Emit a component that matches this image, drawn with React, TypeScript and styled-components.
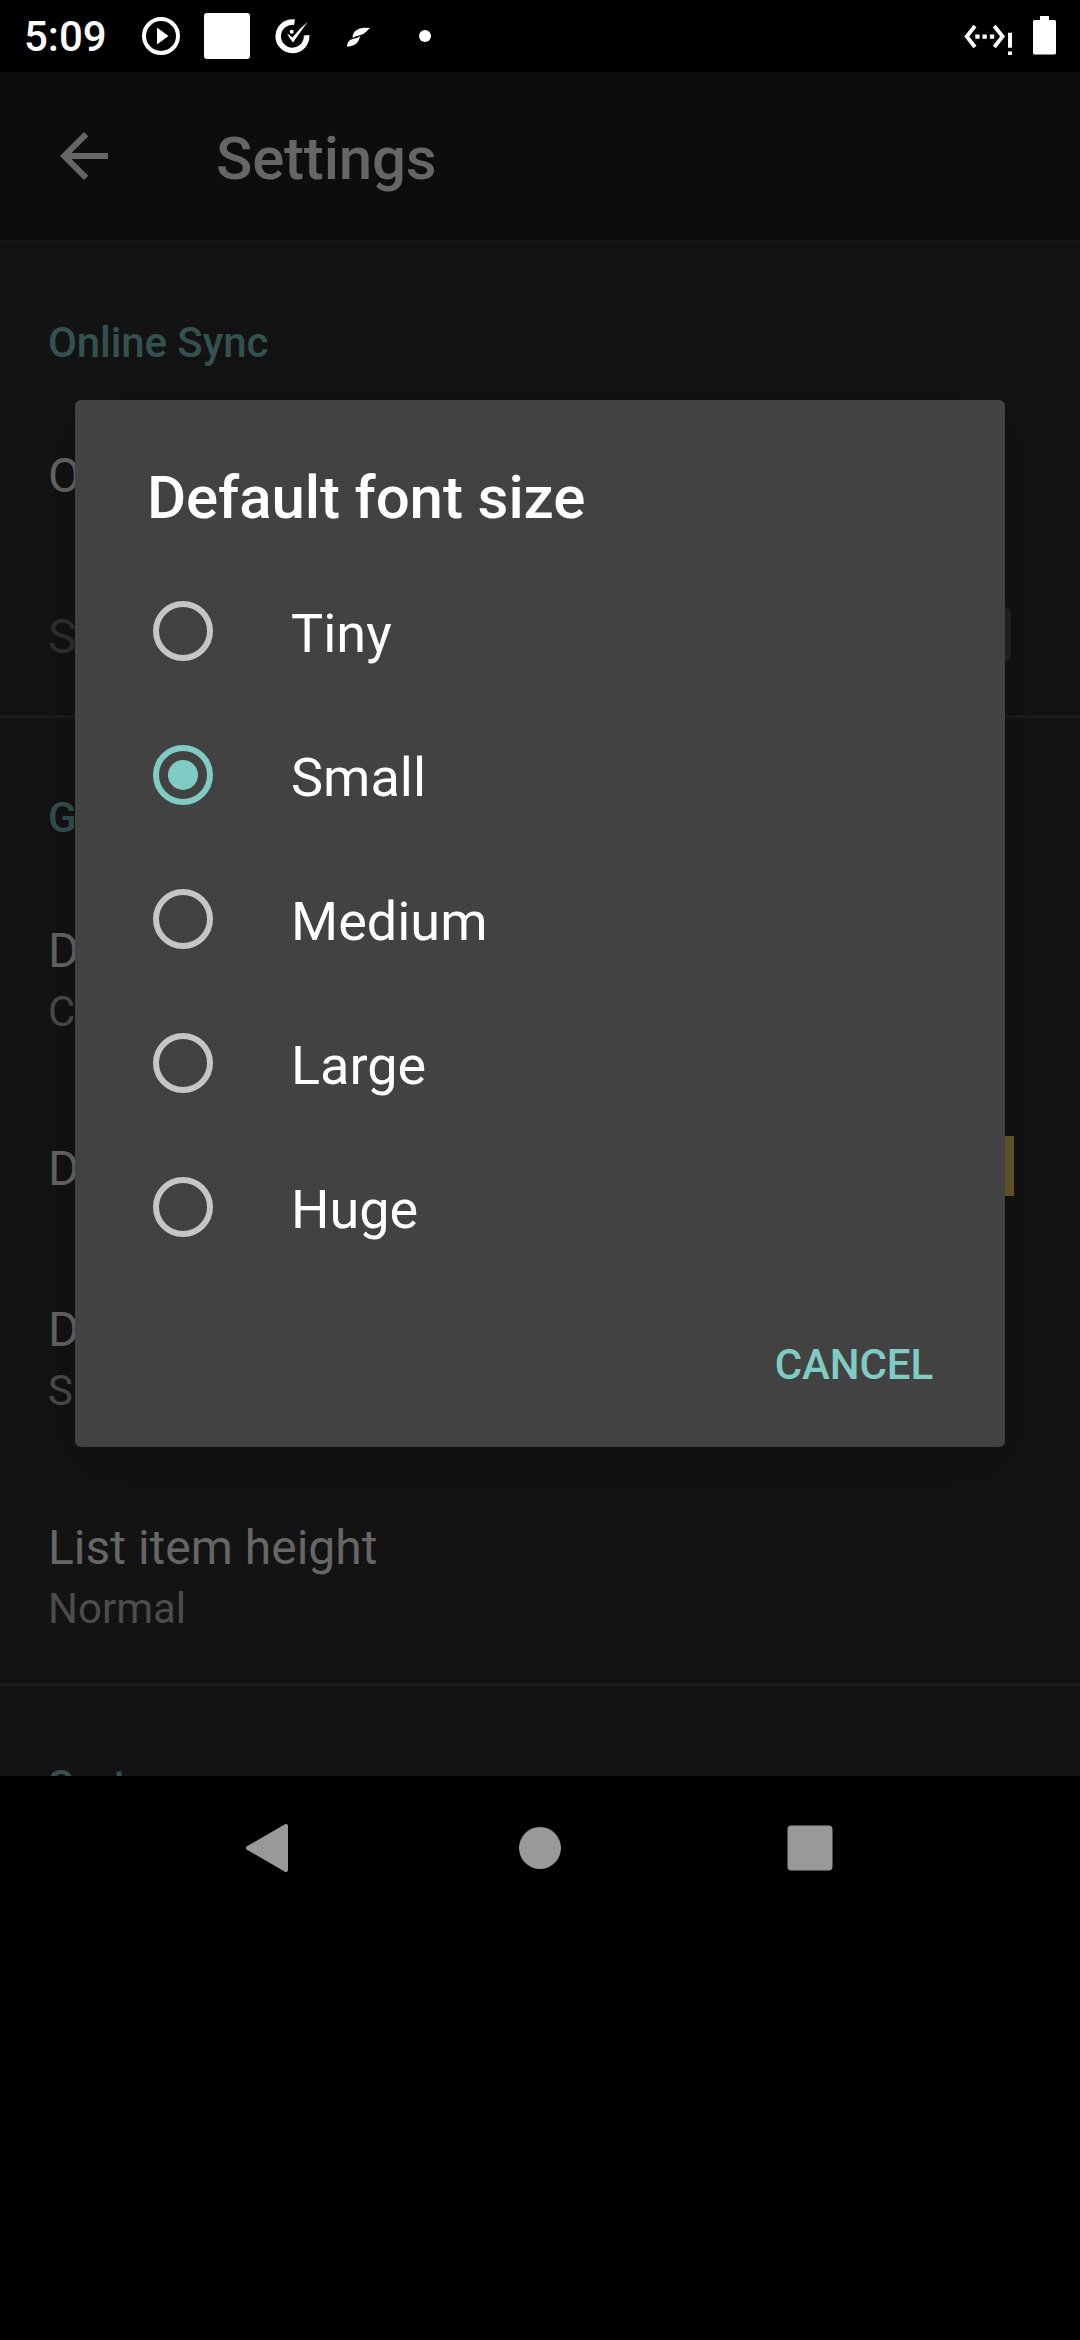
import React from 'react';
import styled, { createGlobalStyle } from 'styled-components';

const Global = createGlobalStyle`
  * { box-sizing: border-box; }
  html, body { margin: 0; background: #000; }
  body { font-family: Roboto, "Liberation Sans", sans-serif; overflow: hidden; }
`;

const Screen = styled.div`
  position: relative;
  width: 1080px;
  height: 2340px;
  background: #000;
  display: flex;
  flex-direction: column;
  overflow: hidden;
`;

const StatusBar = styled.header`
  height: 72px;
  flex: none;
  display: flex;
  align-items: center;
  padding: 0 24px;
  color: #fff;
`;

const Clock = styled.span`
  width: 111px;
  padding-top: 2px;
  font-size: 42px;
  font-weight: 500;
  line-height: 50px;
`;

const StatusIcons = styled.div`
  display: flex;
  flex: 1;
`;

const Connectivity = styled.div`
  display: flex;
  gap: 13px;
`;

const Page = styled.div`
  height: 1704px;
  flex: none;
  display: flex;
  flex-direction: column;
  overflow: hidden;
  background: #131313;
`;

const Toolbar = styled.div`
  height: 168px;
  flex: none;
  display: flex;
  align-items: center;
  padding: 0 48px;
  gap: 96px;
  background: #0d0d0d;
  color: #666;
`;

const ToolbarTitle = styled.h1`
  margin: 0;
  padding-top: 6px;
  font-size: 60px;
  font-weight: 500;
  line-height: 70px;
  letter-spacing: -0.2px;
`;

const Section = styled.section`
  flex: none;
  border-top: 3px solid #1c1c1c;
  &:first-child { border-top-color: #151515; }
`;

const Category = styled.h2`
  margin: 0;
  height: 150px;
  padding: 75px 48px 0;
  font-size: 42px;
  font-weight: 500;
  line-height: 49px;
  letter-spacing: -0.1px;
  color: #33514e;
`;

const Preference = styled.div<{ $disabled?: boolean }>`
  display: flex;
  justify-content: space-between;
  padding: 50px 66px 46px 48px;
  color: ${(p) => (p.$disabled ? '#2f2f2f' : '#666')};
`;

const PrefTitle = styled.div`
  font-size: 48px;
  line-height: 65px;
`;

const Summary = styled.div`
  font-size: 42px;
  line-height: 57px;
  color: #4c4c4c;
`;

const SwitchThumb = styled.span`
  width: 81px;
  height: 54px;
  margin: 3px 3px 0 0;
  border-radius: 6px;
  background: #242424;
`;

const Swatch = styled.span`
  width: 60px;
  height: 60px;
  background: #65582d;
`;

const Dialog = styled.div`
  position: absolute;
  left: 75px;
  top: 400px;
  width: 930px;
  height: 1047px;
  border-radius: 6px;
  background: #424242;
  box-shadow: 0 16px 60px rgba(0, 0, 0, 0.22);
  display: flex;
  flex-direction: column;
`;

const DialogTitle = styled.h2`
  margin: 0;
  height: 159px;
  padding: 63px 72px 0;
  font-size: 60px;
  font-weight: 500;
  line-height: 70px;
  letter-spacing: -0.1px;
  color: #fff;
`;

const Option = styled.label`
  height: 144px;
  display: flex;
  align-items: center;
  padding-left: 78px;
  gap: 78px;
  color: #fff;
  font-size: 54px;
`;

const Radio = styled.span<{ $on: boolean }>`
  width: 60px;
  height: 60px;
  border: 6px solid ${(p) => (p.$on ? '#80cbc4' : '#c6c6c6')};
  border-radius: 50%;
  display: grid;
  place-items: center;
  &::after {
    content: '';
    width: 30px;
    height: 30px;
    border-radius: 50%;
    background: ${(p) => (p.$on ? '#80cbc4' : 'transparent')};
  }
`;

const OptionLabel = styled.span`
  padding-top: 5px;
  line-height: 64px;
`;

const Actions = styled.div`
  display: flex;
  justify-content: flex-end;
  padding: 61px 72px 0 0;
`;

const CancelButton = styled.button`
  border: 0;
  padding: 0;
  background: none;
  color: #80cbc4;
  font: 500 42px/49px Roboto, sans-serif;
  letter-spacing: -0.1px;
`;

const NavBar = styled.nav`
  height: 144px;
  flex: none;
  display: flex;
  justify-content: center;
  align-items: center;
  gap: 198px;
`;

const options = ['Tiny', 'Small', 'Medium', 'Large', 'Huge'];

const Item = ({ title, summary, disabled, extra }: {
  title: string; summary?: string; disabled?: boolean; extra?: React.ReactNode;
}) => (
  <Preference $disabled={disabled}>
    <div>
      <PrefTitle>{title}</PrefTitle>
      {summary && <Summary>{summary}</Summary>}
    </div>
    {extra}
  </Preference>
);

export default function App() {
  return (
    <Screen>
      <Global />
      <StatusBar>
        <Clock>5:09</Clock>
        <StatusIcons>
          <svg width="52" height="56" viewBox="135 8 52 56" fill="#fff">
            <circle cx="161" cy="36" r="17" fill="none" stroke="#fff" strokeWidth="4" />
            <path d="M157 27.5v17l11.5-8.5z" />
          </svg>
          <svg width="80" height="56" viewBox="187 8 80 56" fill="#fff">
            <rect x="204" y="13" width="46" height="46" rx="3" />
          </svg>
          <svg width="60" height="56" viewBox="267 8 60 56" fill="#fff">
            <path d="M294.500 22.200A14.200 14.200 0 1 0 306.600 35.300" fill="none" stroke="#fff" strokeWidth="5.600" />
            <path d="M287 33.200q2 1.200 5.400 4.300Q299 29 307.700 21.700 301 31 293 42.600 289.500 38.500 287 33.200z" />
            <circle cx="291.700" cy="31.700" r="2" />
          </svg>
          <svg width="60" height="56" viewBox="327 8 60 56" fill="#fff">
            <path d="M370 28l-6-.3q-5 .2-8 2.800-4 3-3.300 7.500 3-2 7-2.800 4.500-1.200 7-4zM360 36.300q-3 2-7.500 2.700-3.500 1-4.500 3.300-1 2-1 4.500 5-.5 8-2.200 3.700-2 5-8.300z" />
          </svg>
          <svg width="60" height="56" viewBox="387 8 60 56" fill="#fff">
            <circle cx="425" cy="36" r="6" />
          </svg>
        </StatusIcons>
        <Connectivity>
          <svg width="56" height="56" viewBox="960 8 56 56" fill="#fff">
            <path d="M975 26l-8.300 10.500 8.300 10.500M994.300 26l8.300 10.500-8.300 10.500" fill="none" stroke="#fff" strokeWidth="3.800" />
            <path d="M975.300 34.400h4.300v4.300h-4.300zM982.500 34.400h4.300v4.300h-4.300zM989.900 34.400h4.300v4.300h-4.300zM1008 32.700h4v15h-4zM1008 51.600h4v3.400h-4z" />
          </svg>
          <svg width="27" height="56" viewBox="1029 8 27 56" fill="#fff">
            <path d="M1040 16h9v4h5.500q1.500 0 1.500 1.500v31.500q0 1.500-1.500 1.500h-20q-1.500 0-1.500-1.500v-31.500q0-1.500 1.500-1.500h5.500z" />
          </svg>
        </Connectivity>
      </StatusBar>
      <Page>
        <Toolbar>
          <svg width="72" height="72" viewBox="0 0 24 24" fill="currentColor">
            <path d="M20 11H7.830l5.590-5.590L12 4l-8 8 8 8 1.410-1.410L7.830 13H20v-2z" />
          </svg>
          <ToolbarTitle>Settings</ToolbarTitle>
        </Toolbar>
        <div>
          <Section>
            <Category>Online Sync</Category>
            <Item title="Online" />
            <Item title="Sync" disabled extra={<SwitchThumb />} />
          </Section>
          <Section>
            <Category>General</Category>
            <Item title="Default" summary="Color" />
            <Item title="Default" extra={<Swatch />} />
            <Item title="Default" summary="Small" />
            <Item title="List item height" summary="Normal" />
          </Section>
          <Section>
            <Category>Sort</Category>
          </Section>
        </div>
      </Page>
      <NavBar>
        <svg width="72" height="72" viewBox="234 1812 72 72">
          <path d="M286 1826v44L248 1848z" fill="#999" stroke="#999" strokeWidth="4" strokeLinejoin="round" />
        </svg>
        <svg width="72" height="72" viewBox="504 1812 72 72">
          <circle cx="540" cy="1848" r="21" fill="#999" />
        </svg>
        <svg width="72" height="72" viewBox="774 1812 72 72">
          <rect x="787.500" y="1825.500" width="45" height="45" rx="4" fill="#999" />
        </svg>
      </NavBar>
      <Dialog role="dialog">
        <DialogTitle>Default font size</DialogTitle>
        {options.map((name) => (
          <Option key={name}>
            <Radio $on={name === 'Small'} />
            <OptionLabel>{name}</OptionLabel>
          </Option>
        ))}
        <Actions>
          <CancelButton>CANCEL</CancelButton>
        </Actions>
      </Dialog>
    </Screen>
  );
}
